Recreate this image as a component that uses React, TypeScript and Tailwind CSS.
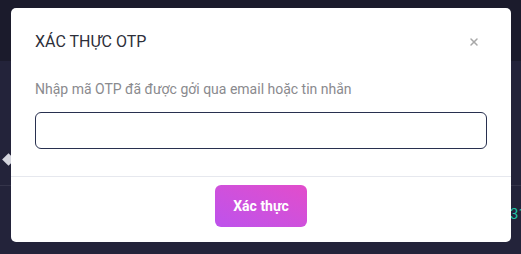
import { X } from 'lucide-react';

export default function App() {
	return (
		<div className="relative h-[254px] w-[521px] overflow-hidden bg-[#23233a] font-['Roboto',sans-serif]">
			{/* page behind the overlay */}
			<div className="h-[61px] bg-[#1b1b2c]" />
			<div className="h-[124px] pt-[94px] pl-[4px]">
				<div className="h-[9px] w-[9px] rotate-45 bg-[#d4d5de]" />
			</div>
			<div className="border-t border-[#34344a]">
				<div className="whitespace-nowrap pl-[510px] pt-[17px] text-[15px] leading-[22px] text-[#1fc2a6]">31</div>
			</div>

			<div className="absolute left-[11px] top-[8px] flex h-[234px] w-[500px] flex-col rounded-[5px] bg-white">
				<div className="flex items-center justify-between px-6 pt-[24px]">
					<h2 className="text-[16px] leading-[20px] text-[#2d2f3a]">XÁC THỰC OTP</h2>
					<X className="mr-[7px] h-[12px] w-[12px] text-[#a8a8a8]" strokeWidth={3} />
				</div>
				<div className="px-6 pt-[27px] pb-[27px]">
					<p className="text-[14px] leading-[20px] text-[#8a8a8e]">Nhập mã OTP đã được gởi qua email hoặc tin nhắn</p>
					<input
						className="mt-[13px] block h-[37px] w-full rounded-[6px] border border-[#28304f] px-3 text-[14px] outline-none"
						type="text"
					/>
				</div>
				<div className="flex justify-center border-t border-[#e6e8ee] pt-[8px]">
					<button className="h-[42px] w-[92px] rounded-[6px] bg-gradient-to-tr from-[#bd52ec] to-[#e24ccb] text-[14px] font-bold text-white">
						Xác thực
					</button>
				</div>
			</div>
		</div>
	);
}
